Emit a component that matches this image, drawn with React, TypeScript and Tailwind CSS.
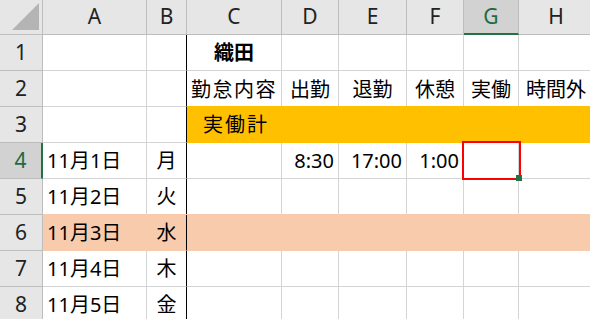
import React from "react";

const cols = ["A", "B", "C", "D", "E", "F", "G", "H"];
const activeCol = "G";
const activeRow = 4;

type Cell = {
  text?: string;
  align?: "left" | "center" | "right";
  bold?: boolean;
  extra?: string;
};

// one entry per row, cells in column order A..H
const rows: { fill?: "orange" | "peach"; fillFrom?: number; cells: Cell[] }[] = [
  { cells: [{}, {}, { text: "織田", align: "center", bold: true, extra: "text-[19px]" }, {}, {}, {}, {}, {}] },
  {
    cells: [
      {},
      {},
      { text: "勤怠内容", align: "center", extra: "tracking-[1.5px]" },
      { text: "出勤", align: "center" },
      { text: "退勤", align: "center" },
      { text: "休憩", align: "center" },
      { text: "実働", align: "center" },
      { text: "時間外", align: "center" },
    ],
  },
  {
    fill: "orange",
    fillFrom: 2,
    cells: [{}, {}, { text: "実働計", extra: "pl-[16px] tracking-[2px]" }, {}, {}, {}, {}, {}],
  },
  {
    cells: [
      { text: "11月1日" },
      { text: "月", align: "center" },
      {},
      { text: "8:30", align: "right" },
      { text: "17:00", align: "right" },
      { text: "1:00", align: "right" },
      {},
      {},
    ],
  },
  { cells: [{ text: "11月2日" }, { text: "火", align: "center" }, {}, {}, {}, {}, {}, {}] },
  {
    fill: "peach",
    fillFrom: 0,
    cells: [{ text: "11月3日" }, { text: "水", align: "center" }, {}, {}, {}, {}, {}, {}],
  },
  { cells: [{ text: "11月4日" }, { text: "木", align: "center" }, {}, {}, {}, {}, {}, {}] },
  { cells: [{ text: "11月5日" }, { text: "金", align: "center" }, {}, {}, {}, {}, {}, {}] },
];

const fillClass = {
  orange: "bg-[#ffc000] border-b-[#ffc000] shadow-[0_-1px_0_#ffc000]",
  peach: "bg-[#f8cbad] border-b-[#f8cbad] shadow-[0_-1px_0_#f8cbad]",
};
const fillRight = {
  orange: "border-r-[#ffc000]",
  peach: "border-r-[#f8cbad]",
};

function ColHeader({ name }: { name: string }) {
  const active = name === activeCol;
  return (
    <div
      className={
        "flex items-center justify-center border-r border-[#bdbdbd] text-[21px] " +
        (active
          ? "bg-[#d2d2d2] text-[#1e6b41] border-b-2 border-b-[#217346]"
          : "bg-[#e6e6e6] text-[#222] border-b border-b-[#bdbdbd]")
      }
    >
      {name}
    </div>
  );
}

function RowHeader({ n }: { n: number }) {
  const active = n === activeRow;
  return (
    <div
      className={
        "flex items-center justify-center border-b border-[#bdbdbd] text-[21px] " +
        (active
          ? "bg-[#d2d2d2] text-[#1e6b41] border-r-2 border-r-[#217346]"
          : "bg-[#e6e6e6] text-[#222] border-r border-r-[#bdbdbd]")
      }
    >
      {n}
    </div>
  );
}

export default function App() {
  return (
    <div
      className="w-[590px] h-[319px] overflow-hidden bg-white"
      style={{ fontFamily: '"Noto Sans", "Noto Sans CJK JP", sans-serif' }}
    >
      <div className="grid grid-cols-[43px_104px_40px_95px_57px_68px_57px_55px_75px] grid-rows-[35px_repeat(8,36px)] w-[594px]">
        {/* corner */}
        <div className="relative bg-[#e6e6e6] border-r border-b border-[#bdbdbd]">
          <svg className="absolute left-0 top-0" width="42" height="34">
            <polygon points="39,3 39,30 12,30" fill="#b4b4b4" />
          </svg>
        </div>
        {cols.map((c) => (
          <ColHeader key={c} name={c} />
        ))}

        {rows.map((row, ri) => {
          const n = ri + 1;
          return (
            <React.Fragment key={n}>
              <RowHeader n={n} />
              {row.cells.map((cell, ci) => {
                const filled = row.fill && ci >= (row.fillFrom ?? 0);
                const isB = ci === 1;
                let cls = "relative flex px-[4px] text-[20px] text-black whitespace-nowrap border-r border-b border-[#d4d4d4] ";
                cls += n === 2 ? "items-end pb-[1px] " : "items-center ";
                if (cell.align === "center") cls += "justify-center ";
                else if (cell.align === "right") cls += "justify-end ";
                if (cell.bold) cls += "font-bold ";
                if (filled) cls += fillClass[row.fill!] + " ";
                if (isB) cls += "border-r-black ";
                else if (filled) cls += fillRight[row.fill!] + " ";
                if (cell.extra) cls += cell.extra;
                const selected = n === activeRow && cols[ci] === activeCol;
                return (
                  <div key={ci} className={cls}>
                    {cell.text}
                    {selected && (
                      <div className="absolute z-10 -left-[2px] -top-[2px] -right-[3px] -bottom-[2px] border-2 border-[#ff0000]">
                        <div className="absolute -right-[3px] -bottom-[3px] w-[6px] h-[6px] bg-[#217346]" />
                      </div>
                    )}
                  </div>
                );
              })}
            </React.Fragment>
          );
        })}
      </div>
    </div>
  );
}
